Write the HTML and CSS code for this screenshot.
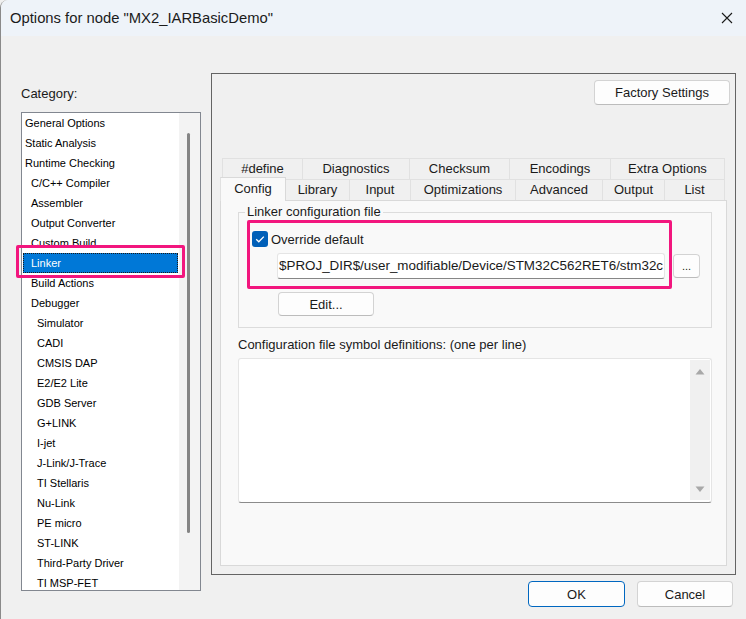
FILE: index.html
```html
<!doctype html>
<html lang="en">
<head>
    <meta charset="utf-8">
    <title>Options for node "MX2_IARBasicDemo"</title>
    <link rel="stylesheet" href="styles.css">
</head>
<body>
<div class="window">
    <div class="titlebar">
        <span class="title">Options for node "MX2_IARBasicDemo"</span>
        <svg class="close" width="12" height="12" viewBox="0 0 12 12">
            <path d="M1 1 L11 11 M11 1 L1 11" stroke="#1a1a1a" stroke-width="1.1" fill="none"></path>
        </svg>
    </div>

    <div class="main">
        <div class="category">
            <div class="category-label">Category:</div>
            <div class="listbox">
                <ul class="items">
                    <li class="lv0">General Options</li>
                    <li class="lv0">Static Analysis</li>
                    <li class="lv0">Runtime Checking</li>
                    <li class="lv1">C/C++ Compiler</li>
                    <li class="lv1">Assembler</li>
                    <li class="lv1">Output Converter</li>
                    <li class="lv1">Custom Build</li>
                    <li class="lv1 selected">Linker</li>
                    <li class="lv1">Build Actions</li>
                    <li class="lv1">Debugger</li>
                    <li class="lv2">Simulator</li>
                    <li class="lv2">CADI</li>
                    <li class="lv2">CMSIS DAP</li>
                    <li class="lv2">E2/E2 Lite</li>
                    <li class="lv2">GDB Server</li>
                    <li class="lv2">G+LINK</li>
                    <li class="lv2">I-jet</li>
                    <li class="lv2">J-Link/J-Trace</li>
                    <li class="lv2">TI Stellaris</li>
                    <li class="lv2">Nu-Link</li>
                    <li class="lv2">PE micro</li>
                    <li class="lv2">ST-LINK</li>
                    <li class="lv2">Third-Party Driver</li>
                    <li class="lv2">TI MSP-FET</li>
                </ul>
                <div class="vscroll"><div class="thumb"></div></div>
                <div class="mark-linker"></div>
            </div>
        </div>

        <div class="right">
            <div class="options">
                <div class="factory-row">
                    <button class="btn factory">Factory Settings</button>
                </div>

                <div class="tabs">
                    <div class="tab-row back">
                        <div class="tab w-define">#define</div>
                        <div class="tab w-diag">Diagnostics</div>
                        <div class="tab w-check">Checksum</div>
                        <div class="tab w-enc">Encodings</div>
                        <div class="tab w-extra">Extra Options</div>
                    </div>
                    <div class="tab-row front">
                        <div class="tab active w-config">Config</div>
                        <div class="tab w-lib">Library</div>
                        <div class="tab w-input">Input</div>
                        <div class="tab w-opt">Optimizations</div>
                        <div class="tab w-adv">Advanced</div>
                        <div class="tab w-out">Output</div>
                        <div class="tab w-list">List</div>
                    </div>

                    <div class="tab-page">
                        <fieldset class="group">
                            <legend>Linker configuration file</legend>
                            <div class="file-row">
                                <div class="mark">
                                    <label class="check">
                                        <span class="box">
                                            <svg width="16" height="16" viewBox="0 0 16 16">
                                                <path d="M4.2 8.3 L6.8 10.8 L11.8 5.6" stroke="#fff" stroke-width="1.3" fill="none"></path>
                                            </svg>
                                        </span>
                                        Override default
                                    </label>
                                    <div class="path">$PROJ_DIR$/user_modifiable/Device/STM32C562RET6/stm32c</div>
                                </div>
                                <button class="btn browse">...</button>
                            </div>
                            <button class="btn edit">Edit...</button>
                        </fieldset>

                        <div class="defs-label">Configuration file symbol definitions: (one per line)</div>
                        <div class="defs">
                            <div class="defs-scroll">
                                <svg width="10" height="7" viewBox="0 0 10 7"><path d="M0.5 6.5 L5 1 L9.5 6.5 Z" fill="#a8a8a8"></path></svg>
                                <svg width="10" height="7" viewBox="0 0 10 7"><path d="M0.5 0.5 L5 6 L9.5 0.5 Z" fill="#a8a8a8"></path></svg>
                            </div>
                        </div>
                    </div>
                </div>
            </div>

            <div class="footer">
                <button class="btn ok">OK</button>
                <button class="btn cancel">Cancel</button>
            </div>
        </div>
    </div>
</div>
</body>
</html>
```

FILE: styles.css
```css
body {
    margin: 0;
    background-color: #f0f0f0;
    font-family: "Liberation Sans", Arial, sans-serif;
    color: #1a1a1a;
}

.window {
    width: 746px;
    height: 619px;
    box-sizing: border-box;
    border-left: 1px solid #8a8a8a;
    border-top-left-radius: 8px;
    overflow: hidden;
    background-color: #f0f0f0;
}

.titlebar {
    height: 36px;
    background-color: #eef3f9;
    display: flex;
    align-items: center;
    justify-content: space-between;
    padding: 0 13px 0 9px;
}

.title {
    font-size: 14.8px;
    color: #1b1b1b;
}

.main {
    display: flex;
}

/* ===== Category list */

.category {
    width: 210px;
    padding-left: 20px;
    box-sizing: border-box;
}

.category-label {
    margin-top: 50px;
    font-size: 13px;
    line-height: 16px;
}

.listbox {
    position: relative;
    margin-top: 10px;
    width: 180px;
    height: 479px;
    box-sizing: border-box;
    border: 1px solid #828790;
    background-color: #fff;
    display: flex;
}

.items {
    list-style: none;
    margin: 0;
    padding: 0;
    width: 157px;
    overflow: hidden;
}

.items li {
    height: 20px;
    line-height: 20px;
    font-size: 11px;
    white-space: nowrap;
    color: #000;
}

.items .lv0 {
    padding-left: 3px;
}

.items .lv1 {
    padding-left: 9px;
}

.items .lv2 {
    padding-left: 15px;
}

.items .selected {
    margin: 0 1px;
    padding-left: 8px;
    background-color: #0078d7;
    color: #fff;
    outline: 1px dotted #1a1a1a;
    outline-offset: -1px;
}

.vscroll {
    width: 21px;
    background-color: #f3f3f3;
}

.thumb {
    margin: 20px 0 0 8px;
    width: 3px;
    height: 400px;
    border-radius: 2px;
    background-color: #858585;
}

.mark-linker {
    position: absolute;
    left: -6px;
    top: 132px;
    width: 169px;
    height: 33px;
    box-sizing: border-box;
    border: 3px solid #f2167e;
    border-radius: 2px;
}

/* ===== Right side */

.right {
    flex: 1;
    display: flex;
    flex-direction: column;
}

.options {
    margin-top: 37px;
    width: 525px;
    height: 502px;
    box-sizing: border-box;
    border: 1px solid #646464;
    padding: 6px 8px 0 8px;
}

.btn {
    font-family: "Liberation Sans", Arial, sans-serif;
    font-size: 13px;
    color: #1a1a1a;
    background-color: #fdfdfd;
    border: 1px solid #d3d3d3;
    border-bottom-color: #bcbcbc;
    border-radius: 4px;
    padding: 0;
    box-sizing: border-box;
}

.factory-row {
    display: flex;
    justify-content: flex-end;
    margin-right: -3px;
}

.factory {
    width: 136px;
    height: 25px;
}

.tabs {
    margin-top: 53px;
}

.tab-row {
    display: flex;
    height: 21px;
}

.tab {
    box-sizing: border-box;
    height: 21px;
    border-top: 1px solid #e1e1e1;
    border-right: 1px solid #e1e1e1;
    text-align: center;
    font-size: 13px;
    line-height: 19px;
    white-space: nowrap;
}

.tab-row .tab:first-child {
    border-left: 1px solid #e1e1e1;
}

.back {
    padding-left: 2px;
}

.tab.active {
    position: relative;
    z-index: 1;
    margin-top: -2px;
    height: 24px;
    line-height: 22px;
    background-color: #f9f9f9;
    border-color: #d9d9d9;
}

.w-define { width: 81px; }
.w-diag { width: 107px; }
.w-check { width: 100px; }
.w-enc { width: 101px; }
.w-extra { width: 114px; }

.w-config { width: 66px; }
.w-lib { width: 64px; }
.w-input { width: 61px; }
.w-opt { width: 105px; }
.w-adv { width: 87px; }
.w-out { width: 62px; }
.w-list { width: 60px; }

.tab-page {
    width: 507px;
    height: 366px;
    box-sizing: border-box;
    border: 1px solid #d9d9d9;
    background-color: #f9f9f9;
    padding: 0 14px 0 17px;
}

.group {
    margin: 3px 0 0 0;
    padding: 0 0 11px 0;
    border: 1px solid #dcdcdc;
    min-width: 0;
}

.group legend {
    margin-left: 6px;
    padding: 0 2px;
    font-size: 13px;
    line-height: 16px;
}

.file-row {
    display: flex;
    align-items: flex-end;
    margin-left: 8px;
}

.mark {
    width: 425px;
    height: 69px;
    box-sizing: border-box;
    border: 3px solid #f2167e;
    border-radius: 2px;
}

.check {
    display: flex;
    align-items: center;
    margin: 8px 0 0 2px;
    height: 16px;
    font-size: 13px;
}

.box {
    width: 16px;
    height: 16px;
    margin-right: 3px;
    border-radius: 3px;
    background-color: #005fb8;
    display: flex;
}

.path {
    margin: 6px 0 0 27px;
    width: 388px;
    height: 26px;
    box-sizing: border-box;
    padding-left: 1px;
    background-color: #fff;
    border: 1px solid #e5e5e5;
    border-bottom-color: #868686;
    border-radius: 3px;
    font-size: 13.4px;
    line-height: 24px;
    white-space: nowrap;
    overflow: hidden;
}

.browse {
    width: 27px;
    height: 24px;
    margin: 0 0 11px 1px;
    font-size: 11px;
}

.edit {
    display: block;
    margin: 3px 0 0 39px;
    width: 96px;
    height: 24px;
}

.defs-label {
    margin-top: 9px;
    font-size: 13px;
    line-height: 16px;
}

.defs {
    margin-top: 5px;
    height: 145px;
    box-sizing: border-box;
    background-color: #fff;
    border: 1px solid #e5e5e5;
    border-bottom-color: #8b8b8b;
    border-radius: 3px;
    display: flex;
    justify-content: flex-end;
}

.defs-scroll {
    width: 20px;
    margin: 1px 1px 2px 0;
    background-color: #f0f0f0;
    display: flex;
    flex-direction: column;
    justify-content: space-between;
    align-items: center;
    padding: 8px 0 7px;
    box-sizing: border-box;
}

.footer {
    display: flex;
    justify-content: flex-end;
    gap: 12px;
    margin-top: 6px;
    padding-right: 13px;
}

.footer .btn {
    height: 26px;
}

.ok {
    width: 97px;
    border-color: #0067c0;
}

.cancel {
    width: 96px;
}
```
